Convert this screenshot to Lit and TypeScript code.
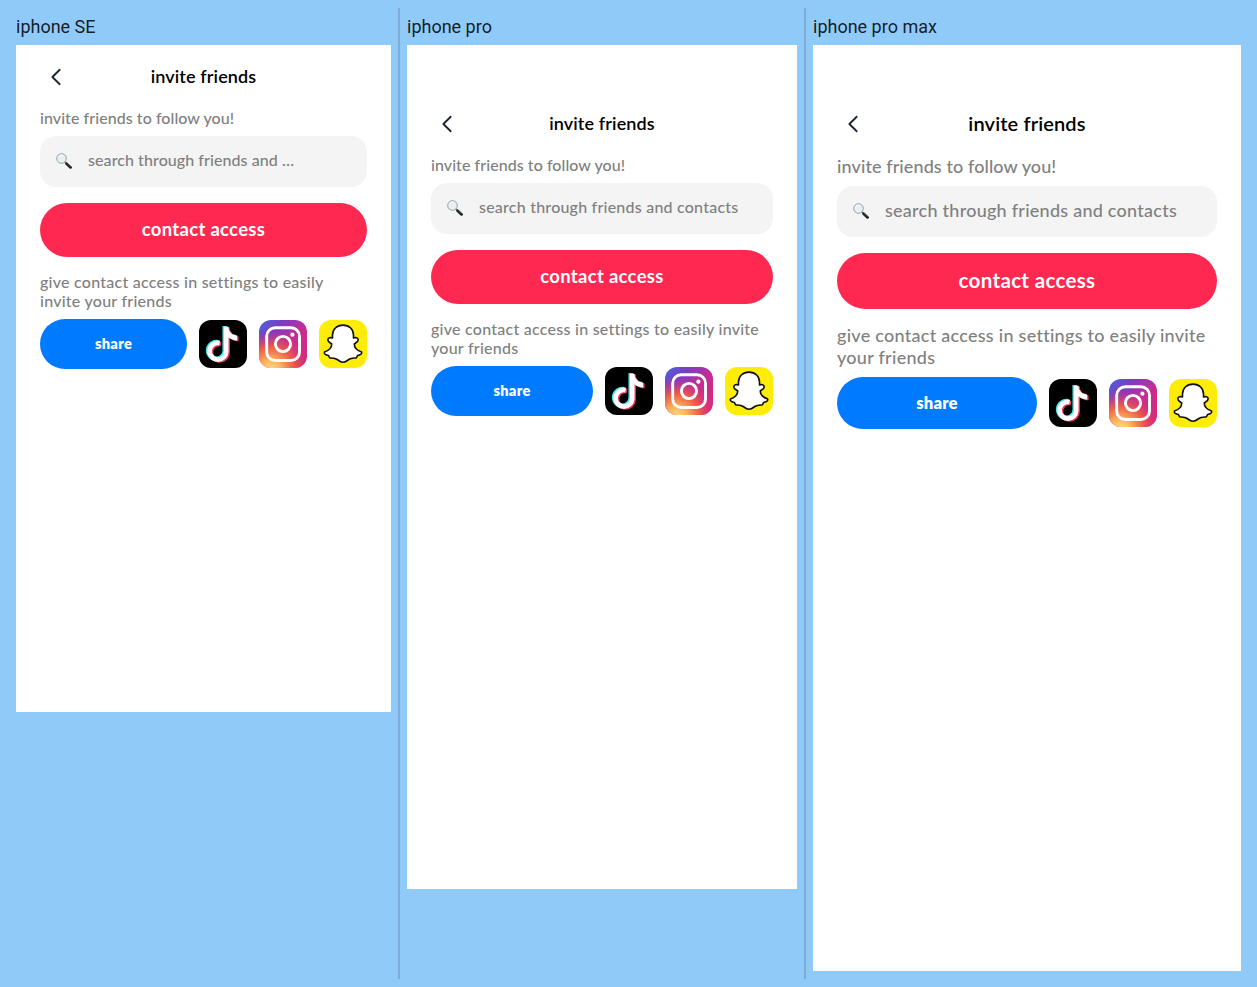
import { LitElement, html, css, svg } from "lit";
import { customElement, property } from "lit/decorators.js";

const ghost = svg`<path d="M24 5.1C17.6 5.1 13.5 9.4 13.5 15V17.9C11.4 17.2 9 17.8 8.8 19.8C8.7 21.7 11 22.7 12.7 23.9C12.9 27.4 9.4 30.6 5.4 32.1C4.7 34 7.2 35 9.4 35.6C10.2 36.3 10 37.7 11 37.9C13.2 38.1 15.8 37.7 18.2 39.5C20 40.9 21.5 42.2 24 42.2C26.5 42.2 28 40.9 29.8 39.5C32.2 37.7 34.8 38.1 37 37.9C38 37.7 37.8 36.3 38.6 35.6C40.8 35 43.3 34 42.6 32.1C38.6 30.6 35.1 27.4 35.3 23.9C37 22.7 39.3 21.7 39.2 19.8C39 17.8 36.6 17.2 34.5 17.9V15C34.5 9.4 30.4 5.1 24 5.1Z" fill="#fff" stroke="#111" stroke-width="1.6" stroke-linejoin="round"/>`;

const note = (color: string, x: number, y: number) => svg`
  <g transform="translate(${x} ${y})">
    <path d="M27.2 6.7V31.2A8.3 8.3 0 1 1 20.6 23.1" fill="none" stroke=${color} stroke-width="4.7"/>
    <path d="M29.2 6.7C29.6 11.4 33 15.2 38.2 15.6V20.4C34.8 20.4 31.6 19.2 29 17Z" fill=${color}/>
  </g>`;

@customElement("invite-screen")
export class InviteScreen extends LitElement {
  @property() placeholder = "search through friends and contacts";

  static styles = css`
    :host {
      display: flex;
      flex-direction: column;
      box-sizing: border-box;
      background: #fff;
      padding: 0 24px;
      font-family: Lato, "Liberation Sans", sans-serif;
      font-weight: 500;
      font-size: 16px;
      line-height: 19px;
      color: #808080;
    }
    :host([device="se"]) { width: 375px; height: 667px; }
    :host([device="pro"]) { width: 390px; height: 844px; padding-top: 47px; }
    :host([device="max"]) {
      width: 428px; height: 926px; padding-top: 47px;
      font-size: 18px; line-height: 22px;
    }
    .header {
      display: grid;
      grid-template-columns: 32px 1fr 32px;
      align-items: center;
      height: 64px;
      flex: none;
    }
    .back { display: block; width: 32px; height: 32px; }
    .title {
      text-align: center;
      color: #000;
      padding-bottom: 2px;
      font-size: 18px;
      font-weight: 600;
      letter-spacing: 0.13px;
    }
    :host([device="max"]) .title { font-size: 20px; }
    .note { margin-top: -1px; padding-bottom: 1px; }
    .invite { letter-spacing: 0.06px; }
    .access { letter-spacing: 0.25px; }
    :host([device="max"]) .invite { letter-spacing: 0.1px; }
    :host([device="max"]) .access { letter-spacing: 0.27px; }
    .search {
      display: flex;
      align-items: center;
      gap: 16px;
      box-sizing: border-box;
      height: 51px;
      margin: 8px 0 16px;
      padding: 0 16px 1px;
      border-radius: 16px;
      background: #f4f4f4;
      white-space: nowrap;
      letter-spacing: 0.22px;
    }
    :host([device="se"]) .search { letter-spacing: 0.07px; }
    :host([device="max"]) .search { letter-spacing: 0.25px; }
    .placeholder { padding-bottom: 3px; }
    :host([device="max"]) .placeholder { padding-bottom: 2px; }
    .lens { display: block; width: 16px; height: 16px; flex: none; }
    .contact, .share {
      display: flex;
      align-items: center;
      justify-content: center;
      box-sizing: border-box;
      border: 0;
      padding: 0 0 2px;
      font: inherit;
      color: #fff;
      border-radius: 28px;
    }
    .contact {
      height: 54px;
      flex: none;
      background: #ff2850;
      font-size: 18.4px;
      font-weight: 700;
      letter-spacing: 0.34px;
      margin-bottom: 16px;
    }
    :host([device="max"]) .contact { height: 56px; font-size: 20.5px; }
    .row { display: flex; align-items: center; gap: 12px; margin-top: 8px; }
    .share {
      flex: 1;
      height: 50px;
      background: #007aff;
      font-size: 14.6px;
      font-weight: 800;
      letter-spacing: 0.3px;
    }
    :host([device="max"]) .share { height: 52px; font-size: 16.6px; letter-spacing: 0.2px; padding-bottom: 1px; }
    .app { display: block; width: 48px; height: 48px; border-radius: 12px; flex: none; }
  `;

  render() {
    return html`
      <div class="header">
        <svg class="back" viewBox="0 0 32 32" fill="none" stroke="#1f2533" stroke-width="1.9" stroke-linecap="round" stroke-linejoin="round">
          <path d="M19.7 8.8L12.4 16L19.7 23.2" />
        </svg>
        <div class="title">invite friends</div>
      </div>
      <div class="note invite">invite friends to follow you!</div>
      <div class="search">
        <svg class="lens" viewBox="0 0 16 16">
          <path d="M8.8 8.9L11 11" stroke="#777" stroke-width="1.5" />
          <path d="M10.6 10.7L14.6 14.4" stroke="#222" stroke-width="2.7" stroke-linecap="round" />
          <path d="M11 10.4L14.6 13.7" stroke="#666" stroke-width=".6" />
          <circle cx="5.5" cy="5.5" r="4.8" fill="#e8f0f3" stroke="#8d9598" stroke-width=".9" />
          <path d="M2.5 4.6A3.5 3.5 0 0 1 7 2.4" fill="none" stroke="#fff" stroke-width="1" />
        </svg>
        <span class="placeholder">${this.placeholder}</span>
      </div>
      <button class="contact">contact access</button>
      <div class="note access">give contact access in settings to easily invite your friends</div>
      <div class="row">
        <button class="share">share</button>
        <svg class="app" viewBox="0 0 48 48">
          <rect width="48" height="48" fill="#000" />
          ${note("#3de6e4", -1.4, -0.8)} ${note("#f0355c", 1.4, 0.9)} ${note("#fff", 0, 0)}
        </svg>
        <svg class="app" viewBox="0 0 48 48">
          <defs>
            <linearGradient id="base" x1="0" y1="0" x2="1" y2="1">
              <stop offset="0" stop-color="#4268de" />
              <stop offset=".26" stop-color="#7c3cc4" />
              <stop offset=".55" stop-color="#c52d92" />
              <stop offset="1" stop-color="#dd2677" />
            </linearGradient>
            <radialGradient id="glow" cx=".25" cy="1.03" r=".82">
              <stop offset="0" stop-color="#ffdb82" />
              <stop offset=".25" stop-color="#fdb35c" />
              <stop offset=".58" stop-color="#f3603f" stop-opacity=".9" />
              <stop offset="1" stop-color="#d92d7a" stop-opacity="0" />
            </radialGradient>
          </defs>
          <rect width="48" height="48" fill="url(#base)" />
          <rect width="48" height="48" fill="url(#glow)" />
          <g fill="none" stroke="#fff" stroke-width="2.9">
            <rect x="7.7" y="7.7" width="32.8" height="32.8" rx="8.5" />
            <circle cx="24" cy="24" r="7.6" />
          </g>
          <circle cx="33.4" cy="14.7" r="2.1" fill="#fff" />
        </svg>
        <svg class="app" viewBox="0 0 48 48">
          <rect width="48" height="48" fill="#ffed08" />
          ${ghost}
        </svg>
      </div>
    `;
  }
}

@customElement("app-root")
export class AppRoot extends LitElement {
  static styles = css`
    :host {
      display: flex;
      box-sizing: border-box;
      width: 100%;
      height: 987px;
      padding: 8px 16px;
      background: #90caf9;
      overflow: hidden;
    }
    .device { flex: none; }
    .label {
      height: 37px;
      line-height: 38px;
      font-family: Roboto, sans-serif;
      font-size: 18px;
      color: rgba(0, 0, 0, 0.87);
      white-space: nowrap;
    }
    .divider { flex: none; width: 2px; margin: 0 7px; background: #7badd6; }
  `;

  render() {
    return html`
      <div class="device">
        <div class="label">iphone SE</div>
        <invite-screen device="se" placeholder="search through friends and …"></invite-screen>
      </div>
      <div class="divider"></div>
      <div class="device">
        <div class="label">iphone pro</div>
        <invite-screen device="pro"></invite-screen>
      </div>
      <div class="divider"></div>
      <div class="device">
        <div class="label">iphone pro max</div>
        <invite-screen device="max"></invite-screen>
      </div>
    `;
  }
}
